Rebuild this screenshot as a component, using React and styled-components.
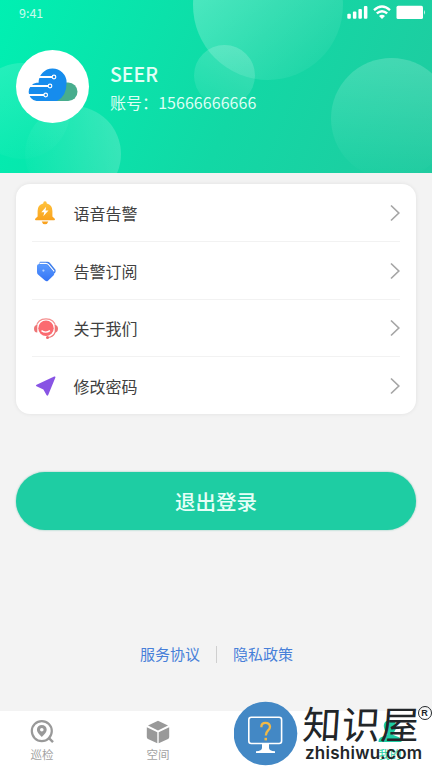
import React from 'react';
import styled, { createGlobalStyle } from 'styled-components';

const GlobalStyle = createGlobalStyle`
  * {
    box-sizing: border-box;
  }

  body {
    margin: 0;
    background: #f3f3f3;
    font-family: 'Noto Sans CJK SC', 'Noto Sans', sans-serif;
  }
`;

const Page = styled.div`
  position: relative;
  display: flex;
  flex-direction: column;
  width: 432px;
  height: 768px;
  overflow: hidden;
  background: #f3f3f3;
`;

const Header = styled.header`
  position: relative;
  height: 173px;
  flex-shrink: 0;
  overflow: hidden;
  color: #fff;
  background: linear-gradient(113deg, #00f0b2 0%, #12d8a5 55%, #20cba0 100%);
`;

const Bubble = styled.span`
  position: absolute;
  left: ${(props) => props.$x - props.$r}px;
  top: ${(props) => props.$y - props.$r}px;
  width: ${(props) => props.$r * 2}px;
  height: ${(props) => props.$r * 2}px;
  border-radius: 50%;
  background: linear-gradient(
    ${(props) => props.$angle}deg,
    rgba(255, 255, 255, ${(props) => props.$alpha}),
    rgba(255, 255, 255, ${(props) => props.$fade || 0})
  );
`;

const StatusBar = styled.div`
  position: relative;
  display: flex;
  align-items: center;
  justify-content: space-between;
  height: 26px;
  padding: 0 6px 0 19px;
`;

const Time = styled.span`
  font-size: 12.5px;
  line-height: 26px;
  color: rgba(255, 255, 255, 0.8);
`;

const Profile = styled.div`
  position: relative;
  display: flex;
  gap: 21px;
  padding: 24px 17px 0 16px;
`;

const Avatar = styled.div`
  width: 73px;
  height: 73px;
  border-radius: 50%;
  background: #fff;
`;

const ProfileText = styled.div`
  padding-top: 9px;
`;

const UserName = styled.div`
  font-size: 19.5px;
  line-height: 30px;
  font-weight: 500;
  color: #e2fff6;
`;

const Account = styled.div`
  font-size: 16px;
  line-height: 26px;
  letter-spacing: 0.05px;
  color: #dcfff4;
`;

const Menu = styled.ul`
  flex-shrink: 0;
  margin: 11px 16px 0;
  padding: 1px 16px 0;
  height: 230px;
  list-style: none;
  background: #fff;
  border-radius: 14px;
  box-shadow: 0 0 4px rgba(0, 0, 0, 0.08);
`;

const MenuItem = styled.li`
  display: flex;
  align-items: center;
  height: 57.4px;
  border-bottom: 1px solid #f2f2f2;

  &:last-child {
    border-bottom: none;
  }
`;

const MenuIcon = styled.span`
  display: flex;
  width: 28px;
  height: 28px;
`;

const MenuLabel = styled.span`
  flex: 1;
  margin-left: 13.5px;
  font-size: 16px;
  line-height: 24px;
  color: #404040;
`;

const LogoutButton = styled.button`
  flex-shrink: 0;
  height: 58px;
  margin: 58px 16px 0;
  padding: 0;
  border: none;
  border-radius: 29px;
  background: #1ecda3;
  box-shadow: 0 0 2px rgba(30, 160, 130, 0.6);
  color: #e6fff7;
  font-family: inherit;
  font-size: 20.5px;
  font-weight: 500;
`;

const Links = styled.div`
  display: flex;
  align-items: center;
  justify-content: center;
  gap: 16px;
  margin-top: 112px;
  padding-left: 1px;
  height: 24px;
`;

const Link = styled.a`
  font-size: 15px;
  line-height: 24px;
  color: #477fd9;
`;

const Divider = styled.span`
  width: 1px;
  height: 17px;
  background: #cfcfcf;
`;

const TabBar = styled.nav`
  display: flex;
  justify-content: space-between;
  height: 57px;
  margin-top: auto;
  padding: 8px 24px 0;
  background: #fff;
`;

const Tab = styled.div`
  display: flex;
  flex-direction: column;
  align-items: center;
  width: 36px;
  height: 48px;
  font-size: 11.5px;
  line-height: 18px;
  color: ${(props) => (props.$active ? '#1ecda3' : '#a3a3a3')};

  svg {
    flex-shrink: 0;
  }
`;

const Watermark = styled.div`
  position: absolute;
  left: 234px;
  top: 701px;
  display: flex;
  width: 198px;
  height: 67px;
`;

const Brand = styled.div`
  position: relative;
  margin-left: 5px;
  color: #222629;
  white-space: nowrap;
`;

const BrandName = styled.div`
  height: 42px;
  font-size: 38.5px;
  line-height: 43px;
  letter-spacing: 0.5px;
  transform: skewX(-4deg);
`;

const BrandUrl = styled.div`
  margin-left: 2px;
  font-family: Inter, 'Noto Sans', sans-serif;
  font-size: 17px;
  line-height: 20px;
  font-weight: 600;
  letter-spacing: 0.25px;
`;

const Registered = styled.span`
  position: absolute;
  left: 114.5px;
  top: 5px;
  display: flex;
  align-items: center;
  justify-content: center;
  width: 14px;
  height: 14px;
  border: 1px solid #222629;
  border-radius: 50%;
  font-family: 'Liberation Sans', sans-serif;
  font-size: 9px;
  font-weight: 700;
  line-height: 1;
`;

const StatusIcons = () => (
  <svg width="80" height="18" viewBox="0 0 80 18" fill="#fff">
    <rect x="1.3" y="9.7" width="3.5" height="5" rx="1" />
    <rect x="6.9" y="7.6" width="3.5" height="7.1" rx="1" />
    <rect x="12.4" y="4.9" width="3.5" height="9.8" rx="1" />
    <rect x="17.9" y="2" width="3.5" height="12.7" rx="1" />
    <g fill="none" stroke="#fff" strokeWidth="2.4">
      <path d="M28 6.2 Q36 -1.2 44 6.2" />
      <path d="M30.8 9.4 Q36 4.9 41.2 9.4" />
    </g>
    <path d="M33 12 Q36 9.4 39 12 L36 15.1 Z" />
    <rect x="50.5" y="1.8" width="26.5" height="13.3" rx="1.6" />
    <path d="M78 6 Q80 8.4 78 10.8 Z" opacity=".8" />
  </svg>
);

const CloudLogo = () => (
  <svg width="73" height="73" viewBox="0 0 73 73">
    <rect x="31" y="32.5" width="30.5" height="18.5" rx="9.25" fill="#48ad8d" />
    <path
      d="M20.5 51 A9.2 9.2 0 0 1 20.5 32.8 L22.6 32.8 A14 14 0 0 1 50.6 32.4 Q50.6 46 41 51 Z"
      fill="#168ced"
    />
    <g stroke="#fff" strokeWidth="1.8" fill="none">
      <path d="M23 27H36M12 36H32M12 45H28" />
      <circle cx="38" cy="27" r="1.8" strokeWidth="1.2" />
      <circle cx="34" cy="36" r="1.8" strokeWidth="1.2" />
      <circle cx="29.7" cy="45" r="1.8" strokeWidth="1.2" />
    </g>
  </svg>
);

const BellIcon = () => (
  <svg width="28" height="28" viewBox="0 0 28 28">
    <defs>
      <linearGradient id="bell" x1="0" y1="0" x2="0" y2="1">
        <stop offset="0" stopColor="#ffc33c" />
        <stop offset="1" stopColor="#f9a21e" />
      </linearGradient>
    </defs>
    <path
      d="M11.2 4.6 Q11.2 2.2 13 2.2 Q14.8 2.2 14.8 4.6 Q20.4 6 20.4 12 V17.5 L22.8 19.8 Q23.5 21.3 22 21.3 H4 Q2.5 21.3 3.2 19.8 L5.6 17.5 V12 Q5.6 6 11.2 4.6Z"
      fill="url(#bell)"
    />
    <path d="M9.7 22.4H16.3Q15.5 25.2 13 25.2T9.7 22.4Z" fill="#f9a21e" />
    <path d="M14.2 7.8 L9.3 13.3 H12.3 L11.3 17.3 L16.5 11.5 H13.5Z" fill="#fff" />
  </svg>
);

const TagIcon = () => (
  <svg width="28" height="28" viewBox="0 0 28 28">
    <defs>
      <linearGradient id="tag" x1="0" y1="0" x2="0" y2="1">
        <stop offset="0" stopColor="#5a9aff" />
        <stop offset="1" stopColor="#3474f5" />
      </linearGradient>
    </defs>
    <path d="M8 4.8 H15.5 Q17 4.9 18 6 L23.3 12.4 Q24.3 14 23.2 15.6 L20 18 L6.5 7.5Z" fill="#3f7fec" />
    <path
      d="M6.5 7.3 L13 7.3 Q14.5 7.4 15.6 8.5 L21.8 15.2 Q23 16.8 21.7 18.3 L16 23.7 Q14.6 24.9 13 23.5 L6 17.5 Q5 16.5 5 15 V9 Q5 7.3 6.5 7.3Z"
      fill="url(#tag)"
    />
    <path d="M7.5 6.4 H13.8 Q15.6 6.5 16.6 7.6 L22.2 14.4" fill="none" stroke="#fff" strokeWidth="1.1" />
    <circle cx="11.4" cy="13.6" r="1.1" fill="#b8d3ff" />
  </svg>
);

const ServiceIcon = () => (
  <svg width="28" height="28" viewBox="0 0 28 28">
    <g transform="translate(0 1)">
      <circle cx="14" cy="13.2" r="7.7" fill="#fb6a70" />
      <path d="M4.3 12 Q5.5 3.9 14 3.9 T23.7 12" fill="none" stroke="#f58f8f" strokeWidth="1.2" />
      <path d="M5.3 10 Q2 10 2 13.8 T5.3 17.5Z M22.7 10 Q26 10 26 13.8 T22.7 17.5Z" fill="#ed7475" />
      <path d="M23.3 17 Q21.3 22 16 22.5" fill="none" stroke="#ef7778" strokeWidth="1.2" />
      <circle cx="15.5" cy="22.5" r="1.5" fill="#ef686b" />
      <path d="M9.5 15.6 Q13.5 18.7 18 15.6" fill="none" stroke="#fff" strokeWidth="1.4" />
    </g>
  </svg>
);

const PlaneIcon = () => (
  <svg width="28" height="28" viewBox="0 0 28 28">
    <path
      d="M22.2 4.5 Q23.7 4 23.4 5.5 L16.2 23 Q15.4 24.5 14.5 23 L11.4 17.4 L4.5 14.2 Q3.1 13.5 4.6 12.7Z"
      fill="#8854e4"
    />
  </svg>
);

const ChevronIcon = () => (
  <svg width="10" height="18" viewBox="0 0 10 18" fill="none" stroke="#a6a6a6" strokeWidth="1.7">
    <path d="M1 1.5L8.8 9L1 16.5" />
  </svg>
);

const PatrolIcon = () => (
  <svg width="26" height="26" viewBox="0 0 26 26" fill="none" stroke="#999">
    <circle cx="12.8" cy="12.1" r="10" strokeWidth="2.2" />
    <path d="M19.2 18.3L24 23.2" strokeWidth="2.4" />
    <path
      d="M12.8 17.9 Q7.9 13.5 7.9 10.8 A4.9 4.9 0 0 1 17.7 10.8 Q17.7 13.5 12.8 17.9Z M12.8 9 A1.8 1.8 0 1 0 12.8 12.6 A1.8 1.8 0 1 0 12.8 9Z"
      fill="#999"
      fillRule="evenodd"
      stroke="none"
    />
  </svg>
);

const CubeIcon = () => (
  <svg width="26" height="26" viewBox="0 0 26 26" fill="#999">
    <path d="M13 1.8L23 6.5L13 11.5L3 6.5Z" />
    <path d="M1.8 8.2L12.3 13.2V24.3L3 20Q1.8 19.3 1.8 18Z" />
    <path d="M24.2 8.2L13.7 13.2V24.3L23 20Q24.2 19.3 24.2 18Z" />
  </svg>
);

const UserIcon = () => (
  <svg width="26" height="26" viewBox="0 0 26 26" fill="#1ecda3">
    <path d="M13 1.2C17.8 1.2 19.8 4.4 19 8.4C18.5 11.4 17 13.4 15.8 14.4V15.7L22 18.2Q24.5 19.2 24.5 23H1.5Q1.5 19.2 4 18.2L10.2 15.7V14.4C9 13.4 7.5 11.4 7 8.4C6.2 4.4 8.2 1.2 13 1.2Z" />
  </svg>
);

const MonitorBadge = () => (
  <svg width="64" height="66" viewBox="0 0 64 66">
    <circle cx="31.5" cy="32.5" r="31.8" fill="#4388c5" />
    <rect x="14.8" y="16.3" width="32.8" height="26.2" rx="2.5" fill="none" stroke="#fff" strokeWidth="1.6" />
    <path d="M28 43H35V47Q35 50 41 50.2V52H22V50.2Q28 50 28 47Z" fill="#fff" />
    <path d="M27.4 26.3V25.5Q27.4 21.8 31.5 21.8T36 25.7C36 29.7 31.8 29.2 31.8 34.5" fill="none" stroke="#f1b947" strokeWidth="2.3" />
    <rect x="30.5" y="36.8" width="2.5" height="2.6" fill="#f1b947" />
  </svg>
);

const menuItems = [
  { label: '语音告警', icon: <BellIcon /> },
  { label: '告警订阅', icon: <TagIcon /> },
  { label: '关于我们', icon: <ServiceIcon /> },
  { label: '修改密码', icon: <PlaneIcon /> },
];

const tabs = [
  { key: 'patrol', label: '巡检', icon: <PatrolIcon /> },
  { key: 'space', label: '空间', icon: <CubeIcon /> },
  { key: 'blank' },
  { key: 'mine', label: '我的', icon: <UserIcon />, active: true },
];

const App = () => (
  <>
    <GlobalStyle />
    <Page>
      <Header>
        <Bubble $x={268} $y={5} $r={75} $angle={140} $alpha={0.34} />
        <Bubble $x={224} $y={75} $r={30.5} $angle={200} $alpha={0.2} $fade={0.05} />
        <Bubble $x={391} $y={118} $r={60.5} $angle={180} $alpha={0.18} />
        <Bubble $x={22} $y={111} $r={48} $angle={160} $alpha={0.15} />
        <Bubble $x={73} $y={154} $r={48} $angle={255} $alpha={0.2} />
        <StatusBar>
          <Time>9:41</Time>
          <StatusIcons />
        </StatusBar>
        <Profile>
          <Avatar>
            <CloudLogo />
          </Avatar>
          <ProfileText>
            <UserName>SEER</UserName>
            <Account>账号：15666666666</Account>
          </ProfileText>
        </Profile>
      </Header>

      <Menu>
        {menuItems.map((item) => (
          <MenuItem key={item.label}>
            <MenuIcon>{item.icon}</MenuIcon>
            <MenuLabel>{item.label}</MenuLabel>
            <ChevronIcon />
          </MenuItem>
        ))}
      </Menu>

      <LogoutButton>退出登录</LogoutButton>

      <Links>
        <Link>服务协议</Link>
        <Divider />
        <Link>隐私政策</Link>
      </Links>

      <TabBar>
        {tabs.map((tab) => (
          <Tab key={tab.key} $active={tab.active}>
            {tab.icon}
            {tab.label}
          </Tab>
        ))}
      </TabBar>

      <Watermark>
        <MonitorBadge />
        <Brand>
          <BrandName>知识屋</BrandName>
          <BrandUrl>zhishiwu.com</BrandUrl>
          <Registered>R</Registered>
        </Brand>
      </Watermark>
    </Page>
  </>
);

export default App;
